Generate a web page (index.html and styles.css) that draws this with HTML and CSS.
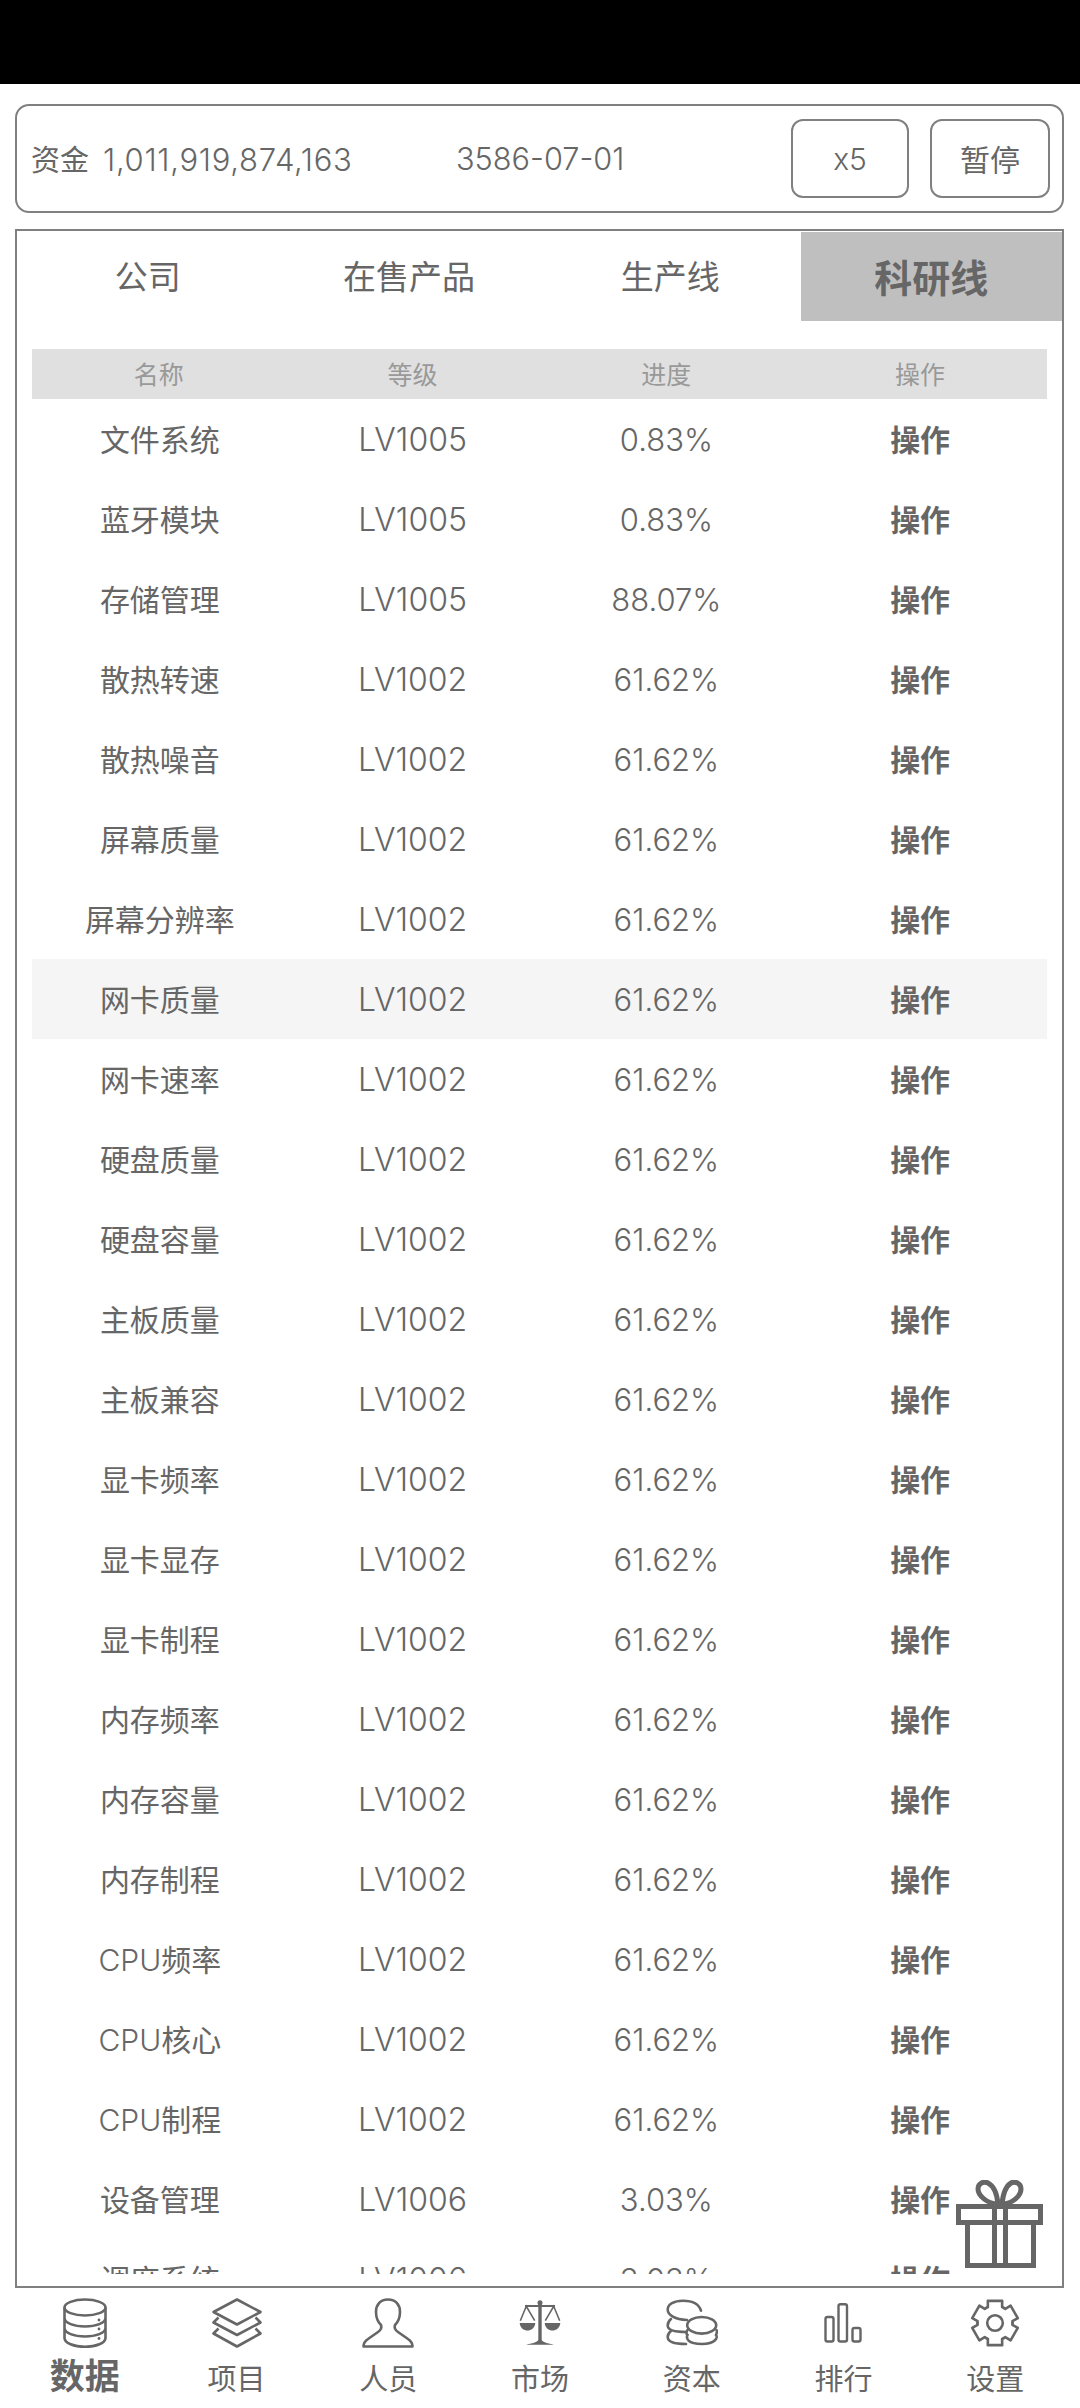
FILE: index.html
```html
<!DOCTYPE html>
<html lang="zh">
<head>
    <meta charset="UTF-8">
    <meta name="viewport" content="width=device-width, initial-scale=1.0">
    <title>科研线</title>
    <link rel="stylesheet" href="styles.css">
</head>
<body>
    <div class="status-bar"></div>

    <!-- 资金 / 日期 -->
    <div class="top-box">
        <span class="money">资金<span class="num money-num">1,011,919,874,163</span></span>
        <span class="num date">3586-07-01</span>
        <span class="btn btn-speed num">x5</span>
        <span class="btn btn-pause">暂停</span>
    </div>

    <div class="main-box">
        <div class="tabs">
            <div class="tab">公司</div>
            <div class="tab">在售产品</div>
            <div class="tab">生产线</div>
            <div class="tab active">科研线</div>
        </div>

        <div class="head-row">
            <div>名称</div><div>等级</div><div>进度</div><div>操作</div>
        </div>

        <div class="rows">
            <div class="row"><div>文件系统</div><div>LV1005</div><div>0.83%</div><div class="op">操作</div></div>
            <div class="row"><div>蓝牙模块</div><div>LV1005</div><div>0.83%</div><div class="op">操作</div></div>
            <div class="row"><div>存储管理</div><div>LV1005</div><div>88.07%</div><div class="op">操作</div></div>
            <div class="row"><div>散热转速</div><div>LV1002</div><div>61.62%</div><div class="op">操作</div></div>
            <div class="row"><div>散热噪音</div><div>LV1002</div><div>61.62%</div><div class="op">操作</div></div>
            <div class="row"><div>屏幕质量</div><div>LV1002</div><div>61.62%</div><div class="op">操作</div></div>
            <div class="row"><div>屏幕分辨率</div><div>LV1002</div><div>61.62%</div><div class="op">操作</div></div>
            <div class="row hover"><div>网卡质量</div><div>LV1002</div><div>61.62%</div><div class="op">操作</div></div>
            <div class="row"><div>网卡速率</div><div>LV1002</div><div>61.62%</div><div class="op">操作</div></div>
            <div class="row"><div>硬盘质量</div><div>LV1002</div><div>61.62%</div><div class="op">操作</div></div>
            <div class="row"><div>硬盘容量</div><div>LV1002</div><div>61.62%</div><div class="op">操作</div></div>
            <div class="row"><div>主板质量</div><div>LV1002</div><div>61.62%</div><div class="op">操作</div></div>
            <div class="row"><div>主板兼容</div><div>LV1002</div><div>61.62%</div><div class="op">操作</div></div>
            <div class="row"><div>显卡频率</div><div>LV1002</div><div>61.62%</div><div class="op">操作</div></div>
            <div class="row"><div>显卡显存</div><div>LV1002</div><div>61.62%</div><div class="op">操作</div></div>
            <div class="row"><div>显卡制程</div><div>LV1002</div><div>61.62%</div><div class="op">操作</div></div>
            <div class="row"><div>内存频率</div><div>LV1002</div><div>61.62%</div><div class="op">操作</div></div>
            <div class="row"><div>内存容量</div><div>LV1002</div><div>61.62%</div><div class="op">操作</div></div>
            <div class="row"><div>内存制程</div><div>LV1002</div><div>61.62%</div><div class="op">操作</div></div>
            <div class="row"><div><span class="num">CPU</span>频率</div><div>LV1002</div><div>61.62%</div><div class="op">操作</div></div>
            <div class="row"><div><span class="num">CPU</span>核心</div><div>LV1002</div><div>61.62%</div><div class="op">操作</div></div>
            <div class="row"><div><span class="num">CPU</span>制程</div><div>LV1002</div><div>61.62%</div><div class="op">操作</div></div>
            <div class="row"><div>设备管理</div><div>LV1006</div><div>3.03%</div><div class="op">操作</div></div>
            <div class="row"><div>调度系统</div><div>LV1006</div><div>3.03%</div><div class="op">操作</div></div>
        </div>

        <!-- 礼物 -->
        <svg class="gift" viewBox="0 0 87 88" fill="none" stroke="#666" stroke-width="5">
            <path d="M2.5 26.5H84.5V42.5H2.5ZM11.5 42.5V85.5H77.5V42.5M38.5 26.5V85.5M49.5 26.5V85.5"/>
            <path d="M42 24C32 24 22 16 22 9C22 3 28 1 32 3C38 6 41 14 42 24ZM46 24C56 24 65 16 65 9C65 3 59 1 55 3C50 6 47 14 46 24Z"/>
        </svg>
    </div>

    <div class="nav">
        <div class="nav-item current">
            <svg class="nav-icon" viewBox="0 0 52 50" fill="none" stroke="#666" stroke-width="2.6">
                <ellipse cx="26" cy="9.5" rx="20.5" ry="8"/>
                <path d="M5.5 9.5V40C5.5 45 15 48.7 26 48.7C37 48.7 46.5 45 46.5 40V9.5M5.5 20C5.5 25 15 28.5 26 28.5C37 28.5 46.5 25 46.5 20M5.5 30C5.5 35 15 38.5 26 38.5C37 38.5 46.5 35 46.5 30"/>
                <circle cx="40" cy="22" r="1.4" fill="#666" stroke="none"/>
                <circle cx="40" cy="31" r="1.4" fill="#666" stroke="none"/>
                <circle cx="40" cy="40.5" r="1.4" fill="#666" stroke="none"/>
            </svg>
            <span>数据</span>
        </div>
        <div class="nav-item">
            <svg class="nav-icon" viewBox="0 0 52 50" fill="none" stroke="#666" stroke-width="2.6" stroke-linejoin="round">
                <path d="M26 1.5L49.5 14L26 26.5L2.5 14Z"/>
                <path d="M7.5 19.5L2.5 24.5L26 37L49.5 24.5L44.5 19.5"/>
                <path d="M7.5 30.5L2.5 35.5L26 48.5L49.5 35.5L44.5 30.5"/>
            </svg>
            <span>项目</span>
        </div>
        <div class="nav-item">
            <svg class="nav-icon" viewBox="0 0 52 50" fill="none" stroke="#666" stroke-width="2.6" stroke-linejoin="round">
                <path d="M26 1.5C18 1.5 14 7 14 14C14 20 16 24 19 27C20 30 19 32 16 34L6 41C3 43 1.5 46 1.5 48.5H50.5C50.5 46 49 43 46 41L36 34C33 32 32 30 33 27C36 24 38 20 38 14C38 7 34 1.5 26 1.5Z"/>
            </svg>
            <span>人员</span>
        </div>
        <div class="nav-item">
            <svg class="nav-icon" viewBox="0 0 52 50" fill="none" stroke="#666" stroke-width="1.6">
                <path d="M26 4V45" stroke-width="3.4"/>
                <circle cx="26" cy="4.7" r="2.5" fill="#666" stroke="none"/>
                <path d="M11 8H41" stroke-width="2"/>
                <path d="M6.3 22.7L12.3 8.3L20.7 22.7M31.3 22.7L39.7 8.3L45.7 22.7"/>
                <path d="M5.7 25H21.3C21 30 17 32.5 13.5 32.5C10 32.5 6 30 5.7 25ZM30.7 25H46.3C46 30 42 32.5 38.5 32.5C35 32.5 31 30 30.7 25Z" fill="#666" stroke="none"/>
                <path d="M26 40C24 44 20 45 12 46.7H40C32 45 28 44 26 40Z" fill="#666" stroke="none"/>
            </svg>
            <span>市场</span>
        </div>
        <div class="nav-item">
            <svg class="nav-icon" viewBox="0 0 52 50" fill="none" stroke="#666" stroke-width="2.6" stroke-linecap="round">
                <path d="M35 12.7C33 6 26 2.7 17 2.7C8 2.7 1.7 6 1.7 11.5C1.7 17 9 21.5 21 22"/>
                <path d="M5 21C2.5 23 1.7 25 1.7 27.5C1.7 32 9 34 20 34"/>
                <path d="M5 33C2.5 35 1.7 37 1.7 39C1.7 44 10 46 20 46"/>
                <ellipse cx="35.7" cy="27.3" rx="14.5" ry="8.3"/>
                <path d="M21.5 32C20 34 20.5 36 21.5 37C20 40 21 46 36 46C50 46 52 39 50 37C51 35 51 33 50.5 32"/>
            </svg>
            <span>资本</span>
        </div>
        <div class="nav-item">
            <svg class="nav-icon" viewBox="0 0 52 50" fill="none" stroke="#666" stroke-width="2.4">
                <rect x="8.5" y="19" width="8" height="24.5" rx="2"/>
                <rect x="21.5" y="6.3" width="8.5" height="37.2" rx="2"/>
                <rect x="35.5" y="30" width="8" height="13.5" rx="2"/>
            </svg>
            <span>排行</span>
        </div>
        <div class="nav-item">
            <svg class="nav-icon" viewBox="0 0 52 50" fill="none" stroke="#666" stroke-width="2.6" stroke-linecap="round" stroke-linejoin="round">
                <g>
                    <path d="M17.25 9.84L18.9 9L18.8 2.84H33.2L33.1 9L34.75 9.84"/>
                    <path d="M17.25 9.84L18.9 9L18.8 2.84H33.2L33.1 9L34.75 9.84" transform="rotate(60 26 25)"/>
                    <path d="M17.25 9.84L18.9 9L18.8 2.84H33.2L33.1 9L34.75 9.84" transform="rotate(120 26 25)"/>
                    <path d="M17.25 9.84L18.9 9L18.8 2.84H33.2L33.1 9L34.75 9.84" transform="rotate(180 26 25)"/>
                    <path d="M17.25 9.84L18.9 9L18.8 2.84H33.2L33.1 9L34.75 9.84" transform="rotate(240 26 25)"/>
                    <path d="M17.25 9.84L18.9 9L18.8 2.84H33.2L33.1 9L34.75 9.84" transform="rotate(300 26 25)"/>
                </g>
                <circle cx="26" cy="25" r="7.8"/>
            </svg>
            <span>设置</span>
        </div>
    </div>
</body>
</html>
```

FILE: styles.css
```css
* { box-sizing: border-box; }
html, body { margin: 0; padding: 0; }
body {
    width: 1080px;
    height: 2408px;
    overflow: hidden;
    background: #fff;
    color: #666;
    font-family: "Noto Sans CJK SC", sans-serif;
    font-size: 30px;
}

.num {
    font-family: Inter, "Noto Sans CJK SC", sans-serif;
    font-weight: 300;
}

.status-bar { height: 84px; background: #000; }

.top-box {
    display: flex;
    align-items: center;
    height: 109px;
    margin: 20px 16px 16px 15px;
    padding: 0 12px 0 14px;
    border: 2px solid #808080;
    border-radius: 14px;
}
.money { width: 425px; padding-bottom: 2px; font-size: 29px; }
.money-num { margin-left: 14px; font-size: 31px; letter-spacing: 0.7px; }
.date { font-size: 30.7px; }
.btn {
    display: flex;
    align-items: center;
    justify-content: center;
    height: 79px;
    border: 2px solid #808080;
    border-radius: 12px;
}
.btn-speed { width: 118px; margin: 0 21px 0 auto; }
.btn-pause { width: 120px; padding-bottom: 2px; }

.main-box {
    position: relative;
    height: 2059px;
    margin: 0 16px 0 15px;
    padding: 1px 0 12px;
    border: 2px solid #808080;
    display: flex;
    flex-direction: column;
}

.tabs { display: flex; height: 89px; }
.tab {
    flex: 1;
    display: flex;
    align-items: center;
    justify-content: center;
    padding-bottom: 4px;
    font-size: 33px;
}
.tab.active {
    padding-bottom: 3px;
    background: #bfbfbf;
    font-size: 38px;
    font-weight: 700;
}

.head-row, .row {
    display: grid;
    grid-template-columns: repeat(4, 1fr);
    align-items: center;
    text-align: center;
}
.head-row {
    height: 50px;
    margin: 28px 15px 0;
    padding-bottom: 3px;
    background: #e0e0e0;
    color: #999;
    font-size: 25px;
}

.rows { flex: 1; overflow: hidden; margin: 0 15px; }
.row { height: 80px; }
.row.hover { background: #f5f5f5; }
.row div:first-child { padding: 0 0 3px 2px; }
.row div:nth-child(2), .row div:nth-child(3) {
    font-family: Inter, sans-serif;
    font-weight: 300;
    font-size: 31px;
}
.row div:nth-child(2) { font-size: 32px; }
.op { padding-bottom: 3px; font-weight: 700; }

.gift {
    position: absolute;
    right: 19px;
    bottom: 18px;
    width: 87px;
    height: 88px;
}

.nav {
    display: grid;
    grid-template-columns: repeat(7, 1fr);
    margin: 10px 9px 0;
}
.nav-item {
    display: flex;
    flex-direction: column;
    align-items: center;
    font-size: 29px;
}
.nav-icon { width: 52px; height: 50px; }
.nav-item span { height: 50px; line-height: 50px; margin-top: 4px; }
.nav-item.current span { margin-top: 1px; font-size: 35px; font-weight: 700; }
```
